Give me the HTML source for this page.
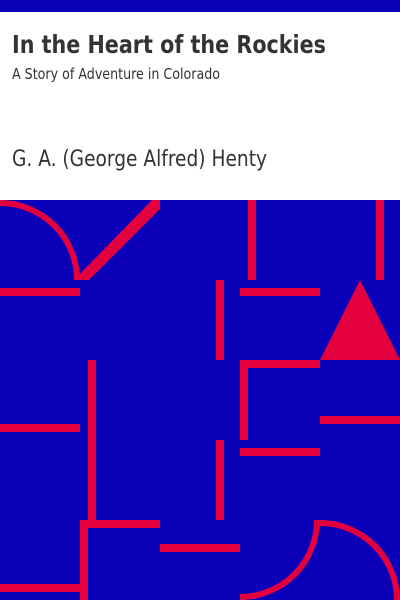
<!DOCTYPE html>
<html><head><meta charset="utf-8"><style>
html,body{margin:0;padding:0;width:400px;height:600px;overflow:hidden;background:#fff}
svg{display:block}
</style></head><body>
<svg width="400" height="600" viewBox="0 0 400 600" xmlns="http://www.w3.org/2000/svg">
<rect x="0" y="0" width="400" height="12" fill="#0a00b8"/>
<rect x="0" y="200" width="400" height="400" fill="#0a00b8"/>
<g font-family="'DejaVu Sans Condensed','DejaVu Sans',sans-serif" fill="#333">
<text x="12" y="53" font-size="25" font-weight="bold" textLength="314" lengthAdjust="spacingAndGlyphs">In the Heart of the Rockies</text>
<text x="12" y="79" font-size="15" textLength="208" lengthAdjust="spacingAndGlyphs">A Story of Adventure in Colorado</text>
<text x="12" y="166" font-size="22" textLength="255" lengthAdjust="spacingAndGlyphs">G. A. (George Alfred) Henty</text>
</g>
<g fill="#e4003f">
<rect x="0" y="288" width="80" height="8"/>
<rect x="248" y="200" width="8" height="80"/>
<rect x="376" y="200" width="8" height="80"/>
<rect x="216" y="280" width="8" height="80"/>
<rect x="240" y="288" width="80" height="8"/>
<polygon points="360,280 320,360 400,360"/>
<rect x="240" y="360" width="80" height="8"/>
<rect x="240" y="360" width="8" height="80"/>
<rect x="88" y="360" width="8" height="160"/>
<rect x="0" y="424" width="80" height="8"/>
<rect x="320" y="416" width="80" height="8"/>
<rect x="216" y="440" width="8" height="80"/>
<rect x="240" y="448" width="80" height="8"/>
<rect x="80" y="520" width="80" height="8"/>
<rect x="80" y="520" width="8" height="80"/>
<rect x="160" y="544" width="80" height="8"/>
<rect x="0" y="584" width="80" height="8"/>
<polygon points="74,280 89,280 160,209 160,200 152,200"/>
</g>
<g fill="none" stroke="#e4003f" stroke-width="6">
<path d="M0,203 A77,77 0 0 1 77,280"/>
<path d="M240,597 A77,77 0 0 0 317,520"/>
<path d="M320,523 A77,77 0 0 1 397,600"/>
</g>
</svg>
</body></html>
